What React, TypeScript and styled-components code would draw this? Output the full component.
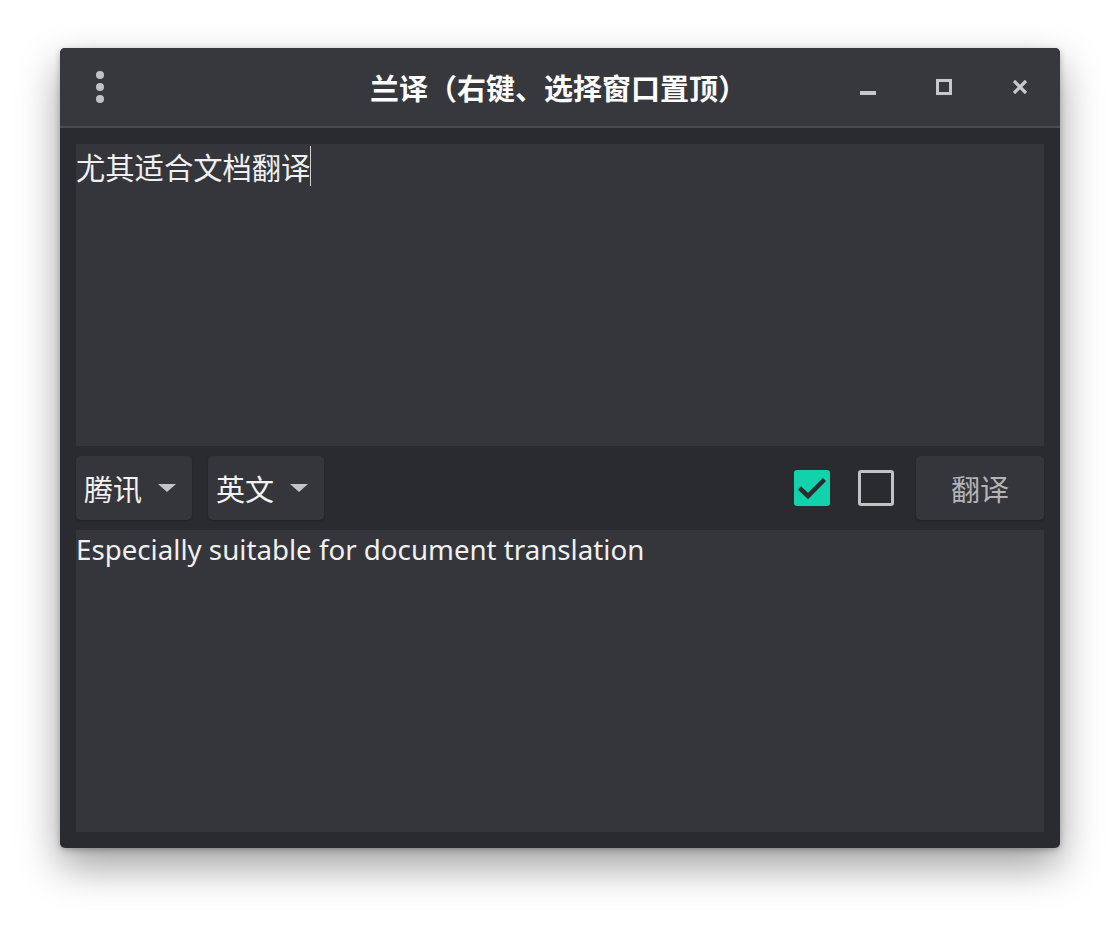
import styled, { createGlobalStyle } from "styled-components";

const GlobalStyle = createGlobalStyle`
  html, body {
    margin: 0;
    padding: 0;
    background: #ffffff;
  }
  body {
    font-family: "Noto Sans", "Noto Sans CJK SC", sans-serif;
  }
`;

const Page = styled.div`
  padding: 48px 60px 80px 60px;
`;

const Window = styled.div`
  width: 1000px;
  height: 800px;
  display: flex;
  flex-direction: column;
  background: #2a2b2f;
  border-radius: 5px;
  overflow: hidden;
  box-shadow: 0 18px 40px rgba(0, 0, 0, 0.38), 0 2px 6px rgba(0, 0, 0, 0.25);
`;

const TitleBar = styled.div`
  height: 78px;
  flex-shrink: 0;
  display: grid;
  grid-template-columns: 228px 1fr 228px;
  align-items: center;
  background: #37383d;
  border-bottom: 2px solid #4a4b50;
`;

const MenuDots = styled.div`
  width: 80px;
  display: flex;
  flex-direction: column;
  align-items: center;
  gap: 4px;
  span {
    width: 8px;
    height: 8px;
    border-radius: 50%;
    background: #c2c2c4;
  }
`;

const Title = styled.div`
  text-align: center;
  color: #ffffff;
  font-family: "Noto Sans CJK SC", sans-serif;
  font-weight: 700;
  font-size: 29px;
  white-space: nowrap;
  padding-right: 3px;
`;

const WinButtons = styled.div`
  display: flex;
  align-items: center;
  justify-content: flex-end;
  gap: 60px;
  padding-right: 32px;
`;

const WinIcon = styled.svg`
  width: 16px;
  height: 16px;
  display: block;
`;

const Body = styled.div`
  flex: 1;
  display: flex;
  flex-direction: column;
  gap: 10px;
  padding: 16px;
`;

const TextArea = styled.div<{ $cjk?: boolean }>`
  height: 302px;
  flex-shrink: 0;
  background: #35363b;
  color: #f0f0f0;
  font-size: ${({ $cjk }) => ($cjk ? "29.3px" : "27.7px")};
  line-height: ${({ $cjk }) => ($cjk ? "44px" : "38px")};
  font-family: ${({ $cjk }) =>
    $cjk ? '"Noto Sans CJK SC", sans-serif' : '"Noto Sans", "Noto Sans CJK SC", sans-serif'};
`;

const Caret = styled.span`
  display: inline-block;
  width: 1px;
  height: 40px;
  margin-top: 2px;
  background: #d0d0d0;
  vertical-align: top;
`;

const Toolbar = styled.div`
  height: 64px;
  flex-shrink: 0;
  display: flex;
  align-items: center;
`;

const Combo = styled.div`
  width: 116px;
  height: 64px;
  box-sizing: border-box;
  display: flex;
  align-items: center;
  gap: 16px;
  padding-left: 8px;
  margin-right: 16px;
  background: #35363b;
  border-radius: 5px;
  box-shadow: 0 1px 2px rgba(0, 0, 0, 0.25);
  color: #f2f2f2;
  font-family: "Noto Sans CJK SC", sans-serif;
  font-size: 29px;
`;

const Arrow = styled.span`
  width: 0;
  height: 0;
  border-left: 9px solid transparent;
  border-right: 9px solid transparent;
  border-top: 8px solid #c4c4c6;
`;

const Spacer = styled.div`
  flex: 1;
`;

const CheckBox = styled.div<{ $checked?: boolean }>`
  width: 36px;
  height: 36px;
  box-sizing: border-box;
  border-radius: 3px;
  display: flex;
  align-items: center;
  justify-content: center;
  background: ${({ $checked }) => ($checked ? "#12d2ac" : "transparent")};
  border: ${({ $checked }) => ($checked ? "none" : "3px solid #c2c2c4")};
  margin-right: ${({ $checked }) => ($checked ? "28px" : "22px")};
`;

const TranslateButton = styled.div`
  width: 128px;
  height: 64px;
  display: flex;
  align-items: center;
  justify-content: center;
  background: #35363b;
  border-radius: 5px;
  box-shadow: 0 1px 2px rgba(0, 0, 0, 0.25);
  color: #b4b4b6;
  font-family: "Noto Sans CJK SC", sans-serif;
  font-size: 29px;
`;

const App = () => {
  return (
    <Page>
      <GlobalStyle />
      <Window>
        <TitleBar>
          <MenuDots>
            <span />
            <span />
            <span />
          </MenuDots>
          <Title>兰译（右键、选择窗口置顶）</Title>
          <WinButtons>
            <WinIcon viewBox="0 0 16 16">
              <rect x="0" y="12" width="16" height="4" fill="#c8c8ca" />
            </WinIcon>
            <WinIcon viewBox="0 0 16 16">
              <rect x="1.5" y="1.5" width="13" height="13" fill="none" stroke="#c8c8ca" strokeWidth="3" />
            </WinIcon>
            <WinIcon viewBox="0 0 16 16">
              <path d="M2 2 L14 14 M14 2 L2 14" stroke="#c8c8ca" strokeWidth="3.2" />
            </WinIcon>
          </WinButtons>
        </TitleBar>
        <Body>
          <TextArea $cjk>
            尤其适合文档翻译
            <Caret />
          </TextArea>
          <Toolbar>
            <Combo>
              腾讯
              <Arrow />
            </Combo>
            <Combo>
              英文
              <Arrow />
            </Combo>
            <Spacer />
            <CheckBox $checked>
              <svg width="36" height="36" viewBox="0 0 36 36">
                <path d="M5.5 18 L14 26 L30.5 9.5" fill="none" stroke="#2a2b2f" strokeWidth="4.5" />
              </svg>
            </CheckBox>
            <CheckBox />
            <TranslateButton>翻译</TranslateButton>
          </Toolbar>
          <TextArea>Especially suitable for document translation</TextArea>
        </Body>
      </Window>
    </Page>
  );
};

export default App;
